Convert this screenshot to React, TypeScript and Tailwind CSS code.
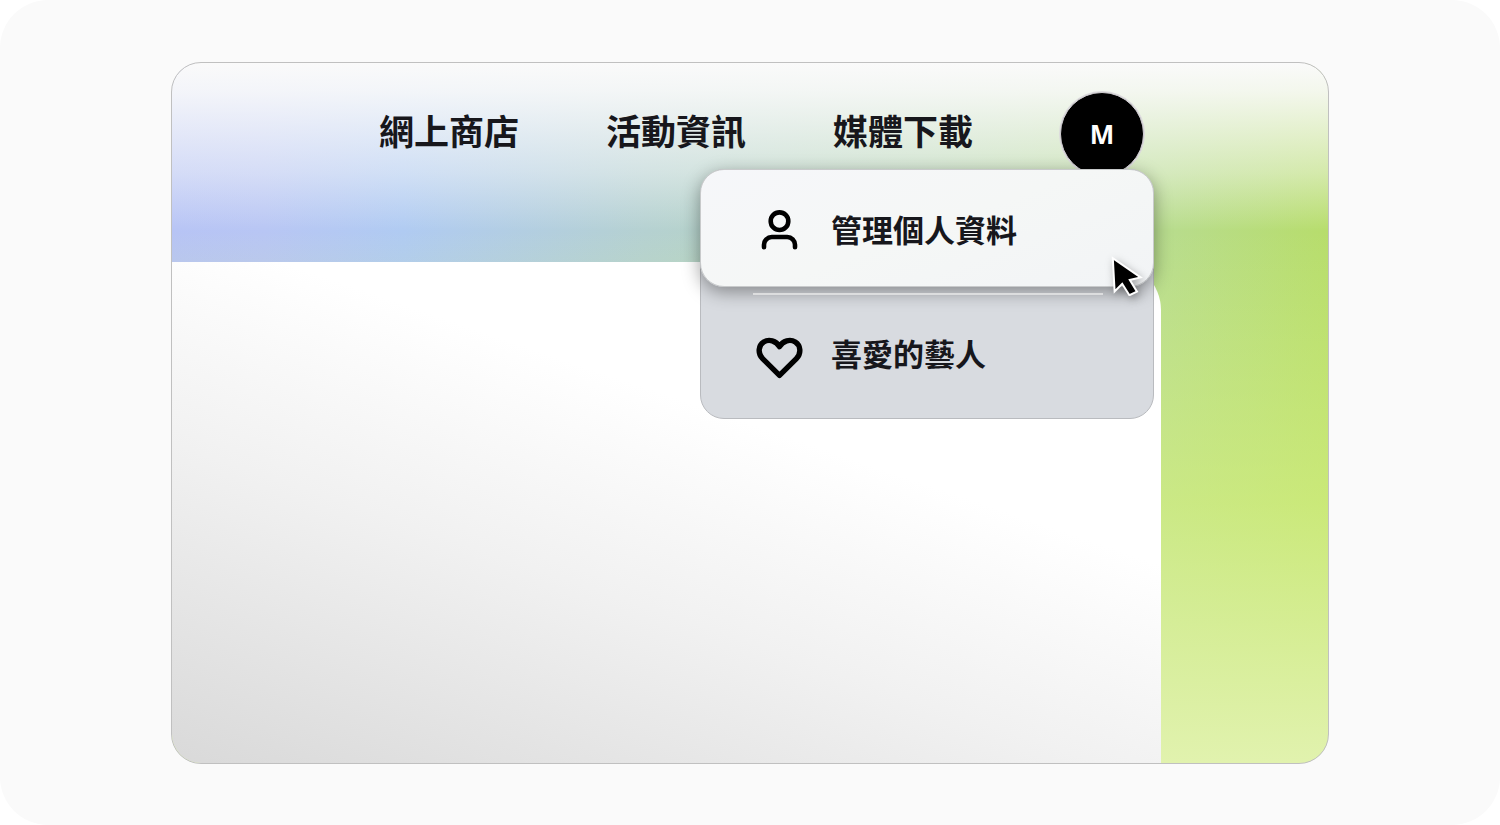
const links = ["網上商店", "活動資訊", "媒體下載"];

function UserIcon() {
  return (
    <svg aria-hidden="true" viewBox="0 0 48 48" className="size-12 shrink-0" fill="none" stroke="currentColor" strokeWidth="4.6" strokeLinecap="round">
      <circle cx="24.5" cy="15.2" r="8.8" />
      <path d="M9 41.2v-2.4a7.8 7.8 0 0 1 7.8-7.8h15.4a7.8 7.8 0 0 1 7.8 7.8v2.4" />
    </svg>
  );
}

function HeartIcon() {
  return (
    <svg aria-hidden="true" viewBox="0 0 48 48" className="size-12 shrink-0" fill="none" stroke="currentColor" strokeWidth="5.4" strokeLinecap="round" strokeLinejoin="round">
      <path d="M24.5 44.4 7.6 27.6C2.4 22.3 3.4 14.3 8.7 11C13.8 7.8 21.1 9.6 24.5 15.6C27.9 9.6 35.2 7.8 40.3 11C45.6 14.3 46.6 22.3 41.4 27.6Z" />
    </svg>
  );
}

function Cursor() {
  return (
    <svg aria-hidden="true" viewBox="0 0 32 42" className="pointer-events-none absolute top-[84px] right-[10px] h-[42px] w-8 drop-shadow-[2px_3px_4px_rgba(0,0,0,0.3)]">
      <path d="M1.8 4.2 3.6 37.4 11.2 29.8 18.4 41.2 26 37.6 18.8 26 29.6 23.4Z" fill="#000" stroke="#fff" strokeWidth="2" />
    </svg>
  );
}

export default function App() {
  return (
    <div className="bg-white [font-family:'Open_Sans','Noto_Sans_CJK_TC',sans-serif] font-bold text-[#17171c]">
      <main className="flex min-h-screen flex-col rounded-[48px] bg-[#fafafa] px-[171px] pt-[62px] pb-[61px]">
        <div className="flex flex-1 flex-col overflow-hidden rounded-[30px] border border-[#c0c0c0] bg-[linear-gradient(to_bottom,#fafafa_0px,#fafafae6_28px,#fafafa70_110px,#fafafa00_168px,#d6f08000_168px,#d6f080a0_440px,#e1f2ae_100%),linear-gradient(to_right,#b7c4f5_0%,#b8c6f4_8%,#b0cbf2_20%,#b5d1d1_41%,#b7d7b4_65%,#b8dc90_85%,#b7dd6c_100%)]">
          <header className="flex h-[199px] shrink-0 items-start justify-end pt-[29px] pr-[184px]">
            <nav className="flex items-center gap-[87px]">
              {links.map((label) => (
                <a key={label} href="#" className="pb-1 text-[35px] leading-[80px] whitespace-nowrap">{label}</a>
              ))}
              <div className="relative">
                <button type="button" className="flex size-[84px] items-center justify-center rounded-full border border-[#d2d0d3] bg-black text-[26px] text-white shadow-[0_0_0_1px_#dcdadd]">M</button>
                <div className="absolute top-[77px] -right-[10px] w-[454px] rounded-3xl border border-[#b9bbbf] bg-[#d8dbe0]">
                  <a href="#" className="-m-px flex h-[118px] items-center gap-7 rounded-3xl border border-[#c8cacb] bg-[linear-gradient(160deg,#f6f7fa,#f5f7f6_50%,#f2f4f6)] pt-1 pl-[54px] text-[31px] whitespace-nowrap shadow-[0_5px_18px_rgba(0,0,0,0.38)]">
                    <span className="text-black"><UserIcon /></span>
                    管理個人資料
                  </a>
                  <div className="relative mt-[7px] mr-[50px] ml-[52px] h-0.5 bg-[#dcddde]" />
                  <a href="#" className="flex h-[123px] items-center gap-7 pb-1 pl-[54px] text-[31px] whitespace-nowrap">
                    <span className="text-black"><HeartIcon /></span>
                    喜愛的藝人
                  </a>
                  <Cursor />
                </div>
              </div>
            </nav>
          </header>
          <section className="mr-[167px] flex-1 rounded-tr-[48px] bg-[linear-gradient(19deg,#d9d9d9,#f1f1f1_38%,#ffffff_64%)]" />
        </div>
      </main>
    </div>
  );
}
